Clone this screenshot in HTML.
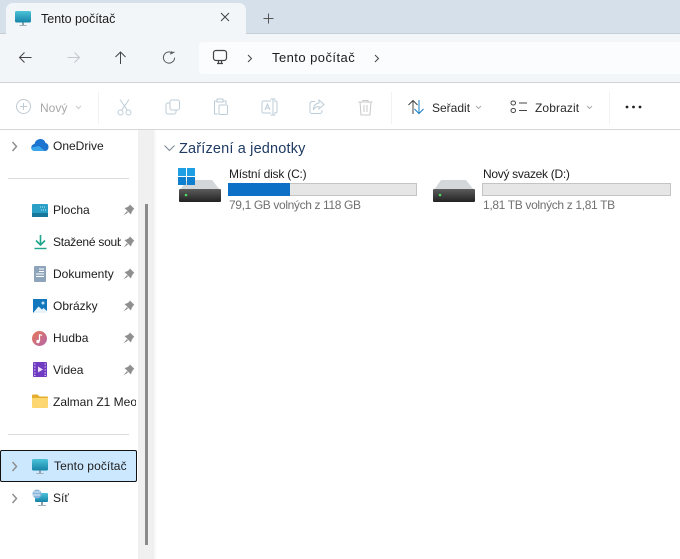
<!DOCTYPE html>
<html><head><meta charset="utf-8">
<style>
html,body{margin:0;padding:0;background:#fff}
#r{position:relative;width:680px;height:559px;overflow:hidden;background:#fff;font-family:"Liberation Sans",sans-serif;color:#1c1c1c;filter:blur(.3px)}
.a{position:absolute}
.t{position:absolute;font-size:12px;line-height:16px;white-space:nowrap}
svg{position:absolute;overflow:visible}
</style></head><body><div id="r">
<div class="a" style="left:0;top:0;width:680px;height:34px;background:#d6e0ea;border-bottom:1px solid #c6ced6;box-sizing:border-box"></div>
<div class="a" style="left:6px;top:3px;width:240px;height:32px;background:#f3f6f9;border-radius:7px 7px 0 0"></div>
<div class="a" style="left:0;top:34px;width:680px;height:48px;background:#f3f6f9"></div>
<div class="a" style="left:0;top:82px;width:680px;height:1px;background:#cfd4d8"></div>
<div class="a" style="left:199px;top:42px;width:481px;height:32px;background:#fbfcfe;border-radius:4px 0 0 4px"></div>
<div class="a" style="left:0;top:129px;width:680px;height:1px;background:#d5d8da"></div>
<div class="a" style="left:138px;top:130px;width:16px;height:429px;background:#f0f0f0"></div>
<div class="a" style="left:154px;top:130px;width:2px;height:429px;background:#f8f8f8"></div>
<div class="a" style="left:145px;top:204px;width:2.500px;height:341px;background:#8a8a8a"></div>

<!-- tab -->
<svg style="left:15px;top:10px" width="17" height="17" viewBox="0 0 17 17"><defs><linearGradient id="m" x1="0" y1="0" x2="0" y2="1"><stop offset="0" stop-color="#4cc3d9"/><stop offset="1" stop-color="#1583a8"/></linearGradient></defs><rect x="0" y="1" width="16" height="11.500" rx="1.500" fill="url(#m)"/><rect x="7" y="12.500" width="2" height="2.500" fill="#8fa3ad"/><rect x="4.500" y="15" width="7" height="1" fill="#9fb0b9"/></svg>
<div class="t" style="left:41px;top:11px;font-size:12.500px">Tento počítač</div>
<svg style="left:220px;top:12px" width="12" height="12" fill="none" stroke="#444" stroke-width="1"><path d="M1 1l8 8M9 1l-8 8"/></svg>
<svg style="left:263px;top:13px" width="12" height="12" fill="none" stroke="#555" stroke-width="1"><path d="M5.500 0.500v10M0.500 5.500h10"/></svg>

<!-- nav -->
<svg style="left:18px;top:50px" width="16" height="16" fill="none" stroke="#444" stroke-width="1"><path d="M1.500 7.500h12M6.500 2.500l-5 5 5 5"/></svg>
<svg style="left:66px;top:50px" width="16" height="16" fill="none" stroke="#c2c7cb" stroke-width="1"><path d="M1.500 7.500h12M8.500 2.500l5 5-5 5"/></svg>
<svg style="left:113px;top:50px" width="16" height="16" fill="none" stroke="#444" stroke-width="1"><path d="M7.500 14V2M2.500 7l5-5 5 5"/></svg>
<svg style="left:162px;top:51px" width="15" height="14" fill="none" stroke="#555" stroke-width="1"><path d="M10 1.800A5.600 5.600 0 1 0 12.600 6.600M9.600 0.200l0.600 2.100-2.200 0.700M10 2L12.500 1"/></svg>
<svg style="left:212px;top:49px" width="17" height="17" fill="none" stroke="#444" stroke-width="1.200"><rect x="1.500" y="1.500" width="13" height="10" rx="2.500"/><path d="M5 14.500h6M6.500 11.500v3M9.500 11.500v3"/></svg>
<svg style="left:247px;top:54px" width="8" height="10" fill="none" stroke="#444" stroke-width="1"><path d="M1 1l3.500 3.500L1 8"/></svg>
<div class="t" style="left:272px;top:50px;font-size:13px;letter-spacing:.45px">Tento počítač</div>
<svg style="left:374px;top:54px" width="8" height="10" fill="none" stroke="#444" stroke-width="1"><path d="M1 1l3.500 3.500L1 8"/></svg>

<!-- toolbar -->
<svg style="left:16px;top:99px" width="16" height="16" fill="none" stroke="#c0cad2" stroke-width="1"><circle cx="7.500" cy="7.500" r="7"/><path d="M7.500 4v7M4 7.500h7"/></svg>
<div class="t" style="left:40px;top:100px;font-size:12px;color:#a8a8a8">Nový</div>
<svg style="left:75px;top:105px" width="8" height="6" fill="none" stroke="#cacaca"><path d="M1 1l2.500 2.500L6 1"/></svg>
<div class="a" style="left:98px;top:92px;width:1px;height:32px;background:#f1f2f3"></div>
<svg style="left:117px;top:99px" width="16" height="17" fill="none" stroke="#bdcdd8" stroke-width="1"><path d="M3 0.500l7.500 11M12 0.500L4.500 11.500"/><circle cx="3.500" cy="13.500" r="2.500"/><circle cx="11.500" cy="13.500" r="2.500"/></svg>
<svg style="left:165px;top:99px" width="16" height="16" fill="none" stroke="#bdcdd8" stroke-width="1"><rect x="5" y="1" width="9.500" height="10" rx="2"/><path d="M5 4H3a2 2 0 0 0-2 2v7a2 2 0 0 0 2 2h6a2 2 0 0 0 2-2v-2"/></svg>
<svg style="left:213px;top:98px" width="16" height="18" fill="none" stroke="#bdcdd8" stroke-width="1"><path d="M4 3H1.500v13H5"/><path d="M10 3h3v3"/><rect x="4" y="1" width="6" height="3"/><rect x="6" y="7" width="8.500" height="9.500" rx="1"/></svg>
<svg style="left:261px;top:98px" width="17" height="18" fill="none" stroke="#bdcdd8" stroke-width="1"><path d="M10 3H2.500A1.500 1.500 0 0 0 1 4.500v9A1.500 1.500 0 0 0 2.500 15H10M13 3h1.500A1.500 1.500 0 0 1 16 4.500v9a1.500 1.500 0 0 1-1.500 1.500H13M9.500 1h5M12 1v16M9.500 17h5M4 12l2.500-6L9 12M5 10h3"/></svg>
<svg style="left:309px;top:99px" width="16" height="16" fill="none" stroke="#bdcdd8" stroke-width="1"><path d="M6 2.500H3A2 2 0 0 0 1 4.500v8a2 2 0 0 0 2 2h8a2 2 0 0 0 2-2V11"/><path d="M10 1l5 4.500-5 4.500V7.500C7.500 7.500 5.500 8.500 4.500 11c0-4 2-6.500 5.500-7z"/></svg>
<svg style="left:358px;top:99px" width="15" height="17" fill="none" stroke="#c8c8c8" stroke-width="1"><path d="M0.500 3h14M5 3V1.500h5V3M2 3l1 13h9l1-13M6 6v7M9 6v7"/></svg>
<div class="a" style="left:391px;top:92px;width:1px;height:32px;background:#f1f2f3"></div>
<svg style="left:408px;top:99px" width="17" height="16" fill="none" stroke-width="1"><path d="M5 15V1.500M0.500 6L5 1.500 9.500 6" stroke="#444"/><path d="M11 1v13.500M6.500 10l4.500 4.500L15.500 10" stroke="#1a7fc9"/></svg>
<div class="t" style="left:432px;top:100px;font-size:12px;color:#2a2a2a">Seřadit</div>
<svg style="left:475px;top:105px" width="8" height="6" fill="none" stroke="#aaa"><path d="M1 1l2.500 2.500L6 1"/></svg>
<svg style="left:510px;top:100px" width="18" height="14" fill="none" stroke="#444" stroke-width="1"><rect x="1" y="1" width="4.500" height="4" rx="2"/><rect x="1" y="8.500" width="4.500" height="4" rx="2"/><path d="M9 3h8M9 10.500h8"/></svg>
<div class="t" style="left:535px;top:100px;font-size:12px;letter-spacing:.1px;color:#2a2a2a">Zobrazit</div>
<svg style="left:586px;top:105px" width="8" height="6" fill="none" stroke="#aaa"><path d="M1 1l2.500 2.500L6 1"/></svg>
<div class="a" style="left:609px;top:92px;width:1px;height:32px;background:#f1f2f3"></div>
<svg style="left:625px;top:105px" width="18" height="4" fill="#222"><circle cx="2" cy="2" r="1.400"/><circle cx="8.500" cy="2" r="1.400"/><circle cx="15" cy="2" r="1.400"/></svg>

<!-- sidebar -->
<svg style="left:11px;top:141px" width="8" height="11" fill="none" stroke="#8f8f8f" stroke-width="1.500"><path d="M1.500 1l4 4.500-4 4.500"/></svg>
<svg style="left:31px;top:138px" width="18" height="14"><path d="M4 13a3.500 3.500 0 0 1-.5-7C4 3 6.500 1 9.500 1c2.500 0 4.500 1.500 5 4 2 .3 3 2 3 4 0 2.300-1.500 4-3.500 4z" fill="#1c74d0"/><path d="M3 13C1 12.500 0 11 .3 9.500L8 8l6 5z" fill="#3aa5ea"/></svg>
<div class="t" style="left:53px;top:138px">OneDrive</div>
<div class="a" style="left:8px;top:178px;width:121px;height:1px;background:#dcdcdc"></div>

<svg style="left:32px;top:204px" width="16" height="13"><rect width="16" height="13" rx="1" fill="#2aa0c8"/><rect x="0" y="9" width="16" height="4" fill="#17779b"/><path d="M8 3h6M9 6h5" stroke="#b5e6f2" stroke-dasharray="1 1"/></svg>
<div class="t" style="left:53px;top:202px">Plocha</div>
<svg style="left:34px;top:234px" width="14" height="16" fill="none" stroke="#1fa58e" stroke-width="1.600"><path d="M6.500 1v9.500M2 6.500l4.500 4.500L11 6.500"/><path d="M.5 14.500h12" stroke-width="1.400"/></svg>
<div class="t" style="left:53px;top:234px;width:68px;overflow:hidden;letter-spacing:-.25px">Stažené soubory</div>
<svg style="left:34px;top:266px" width="12" height="16"><rect width="12" height="16" rx="1" fill="#8ea4bb"/><path d="M5 3h5M5 5.500h5M2 8h8M2 10.500h8" stroke="#fff"/></svg>
<div class="t" style="left:53px;top:266px">Dokumenty</div>
<svg style="left:33px;top:299px" width="14" height="14"><rect width="14" height="14" fill="#1377bd"/><path d="M0 14L5.500 7.500 9 10.500 10.500 9 14 12V14z" fill="#e8f3fa"/><circle cx="10" cy="4" r="1.500" fill="#bfe2f5"/></svg>
<div class="t" style="left:53px;top:298px">Obrázky</div>
<svg style="left:32px;top:331px" width="15" height="15"><defs><linearGradient id="h" x1="0" y1="0" x2="1" y2="1"><stop offset="0" stop-color="#e8795a"/><stop offset="1" stop-color="#b465a8"/></linearGradient></defs><circle cx="7.500" cy="7.500" r="7.500" fill="url(#h)"/><path d="M7.500 3.500v6.500" stroke="#fff" stroke-width="1.200"/><path d="M7.500 3.500l2.500 1" stroke="#fff"/><circle cx="6" cy="10.500" r="1.700" fill="#fff"/></svg>
<div class="t" style="left:53px;top:330px">Hudba</div>
<svg style="left:33px;top:362px" width="14" height="15"><rect width="14" height="15" rx="1" fill="#6f3bc0"/><path d="M5 4.500l5 3-5 3z" fill="#eadcf9"/><path d="M1 2h1.500M1 5h1.500M1 8h1.500M1 11h1.500M1 13.500h1.500M11.500 2H13M11.500 5H13M11.500 8H13M11.500 11H13M11.500 13.500H13" stroke="#d9c7f2"/></svg>
<div class="t" style="left:53px;top:362px">Videa</div>
<svg style="left:32px;top:394px" width="16" height="14"><path d="M0 1.500A1 1 0 0 1 1 .5h4.500L7.500 2.500H15a1 1 0 0 1 1 1V5H0z" fill="#e5ae2e"/><path d="M0 4h16v9a1 1 0 0 1-1 1H1a1 1 0 0 1-1-1z" fill="#fcd76f"/></svg>
<div class="t" style="left:53px;top:394px;width:83px;overflow:hidden">Zalman Z1 Meo</div>

<svg style="left:123px;top:204px" width="12" height="12" fill="#8f8f8f"><path d="M7 .5l4.500 4.500-1.500.8-1.500 3-.5 1.700L1.500 4 3.500 3.500 6 2z"/><path d="M4 7l-3.500 4.500L5 8.500z"/></svg>
<svg style="left:123px;top:236px" width="12" height="12" fill="#8f8f8f"><path d="M7 .5l4.500 4.500-1.500.8-1.500 3-.5 1.700L1.500 4 3.500 3.500 6 2z"/><path d="M4 7l-3.500 4.500L5 8.500z"/></svg>
<svg style="left:123px;top:268px" width="12" height="12" fill="#8f8f8f"><path d="M7 .5l4.500 4.500-1.500.8-1.500 3-.5 1.700L1.500 4 3.500 3.500 6 2z"/><path d="M4 7l-3.500 4.500L5 8.500z"/></svg>
<svg style="left:123px;top:300px" width="12" height="12" fill="#8f8f8f"><path d="M7 .5l4.500 4.500-1.500.8-1.500 3-.5 1.700L1.500 4 3.500 3.500 6 2z"/><path d="M4 7l-3.500 4.500L5 8.500z"/></svg>
<svg style="left:123px;top:332px" width="12" height="12" fill="#8f8f8f"><path d="M7 .5l4.500 4.500-1.500.8-1.500 3-.5 1.700L1.500 4 3.500 3.500 6 2z"/><path d="M4 7l-3.500 4.500L5 8.500z"/></svg>
<svg style="left:123px;top:364px" width="12" height="12" fill="#8f8f8f"><path d="M7 .5l4.500 4.500-1.500.8-1.500 3-.5 1.700L1.500 4 3.500 3.500 6 2z"/><path d="M4 7l-3.500 4.500L5 8.500z"/></svg>

<div class="a" style="left:8px;top:434px;width:121px;height:1px;background:#dcdcdc"></div>
<div class="a" style="left:0;top:450px;width:137px;height:32px;box-sizing:border-box;background:#cce8ff;border:1px solid #111;border-radius:2px"></div>
<svg style="left:11px;top:461px" width="8" height="11" fill="none" stroke="#8f8f8f" stroke-width="1.500"><path d="M1.500 1l4 4.500-4 4.500"/></svg>
<svg style="left:32px;top:458px" width="17" height="17"><rect x="0" y="1" width="16" height="11.500" rx="1.500" fill="url(#m)"/><rect x="7" y="12.500" width="2" height="2.500" fill="#8fa3ad"/><rect x="4.500" y="15" width="7" height="1" fill="#9fb0b9"/></svg>
<div class="t" style="left:54px;top:458px;letter-spacing:.1px">Tento počítač</div>
<svg style="left:11px;top:493px" width="8" height="11" fill="none" stroke="#8f8f8f" stroke-width="1.500"><path d="M1.500 1l4 4.500-4 4.500"/></svg>
<svg style="left:32px;top:489px" width="17" height="18"><rect x="3" y="4" width="13" height="9" rx="1" fill="url(#m)"/><circle cx="5" cy="5" r="4.500" fill="#8ab6dc"/><path d="M2 3h6M1 6h7" stroke="#dbe9f5"/><rect x="9" y="13" width="2" height="3" fill="#8fa3ad"/><rect x="6" y="16" width="8" height="1" fill="#9fb0b9"/></svg>
<div class="t" style="left:53px;top:490px">Síť</div>

<!-- main -->
<svg style="left:164px;top:145px" width="11" height="7" fill="none" stroke="#7a8793" stroke-width="1"><path d="M.5 .5l5 5 5-5"/></svg>
<div class="t" style="left:179px;top:140px;font-size:14.500px;line-height:18px;letter-spacing:.17px;color:#1f3a63">Zařízení a jednotky</div>

<svg style="left:179px;top:180px" width="43" height="23"><defs><linearGradient id="d" x1="0" y1="0" x2="0" y2="1"><stop offset="0" stop-color="#5c5c5c"/><stop offset="1" stop-color="#222"/></linearGradient></defs><path d="M1 10L8 0H33L41 10V11H1z" fill="#d3d7da"/><rect x="0" y="9" width="42" height="13" rx="1" fill="url(#d)"/><circle cx="7" cy="15" r="1.300" fill="#4cd964"/></svg>
<svg style="left:178px;top:168px" width="17" height="17"><rect width="8" height="8" fill="#1e9fe3"/><rect x="9" width="8" height="8" fill="#1e9fe3"/><rect y="9" width="8" height="8" fill="#0f7fcf"/><rect x="9" y="9" width="8" height="8" fill="#0f7fcf"/></svg>
<div class="t" style="left:229px;top:166px;letter-spacing:-.2px">Místní disk (C:)</div>
<div class="a" style="left:228px;top:183px;width:189px;height:13px;box-sizing:border-box;background:#e6e6e6;border:1px solid #c4c4c4"></div>
<div class="a" style="left:228px;top:183px;width:62px;height:13px;background:#0b70c6"></div>
<div class="t" style="left:229px;top:197px;letter-spacing:-.37px;color:#707070">79,1 GB volných z 118 GB</div>

<svg style="left:433px;top:180px" width="43" height="23"><path d="M1 10L8 0H33L41 10V11H1z" fill="#d3d7da"/><rect x="0" y="9" width="42" height="13" rx="1" fill="url(#d)"/><circle cx="7" cy="15" r="1.300" fill="#4cd964"/></svg>
<div class="t" style="left:483px;top:166px;letter-spacing:-.3px">Nový svazek (D:)</div>
<div class="a" style="left:482px;top:183px;width:189px;height:13px;box-sizing:border-box;background:#e6e6e6;border:1px solid #c4c4c4"></div>
<div class="t" style="left:483px;top:197px;letter-spacing:-.34px;color:#707070">1,81 TB volných z 1,81 TB</div>
</div></body></html>
